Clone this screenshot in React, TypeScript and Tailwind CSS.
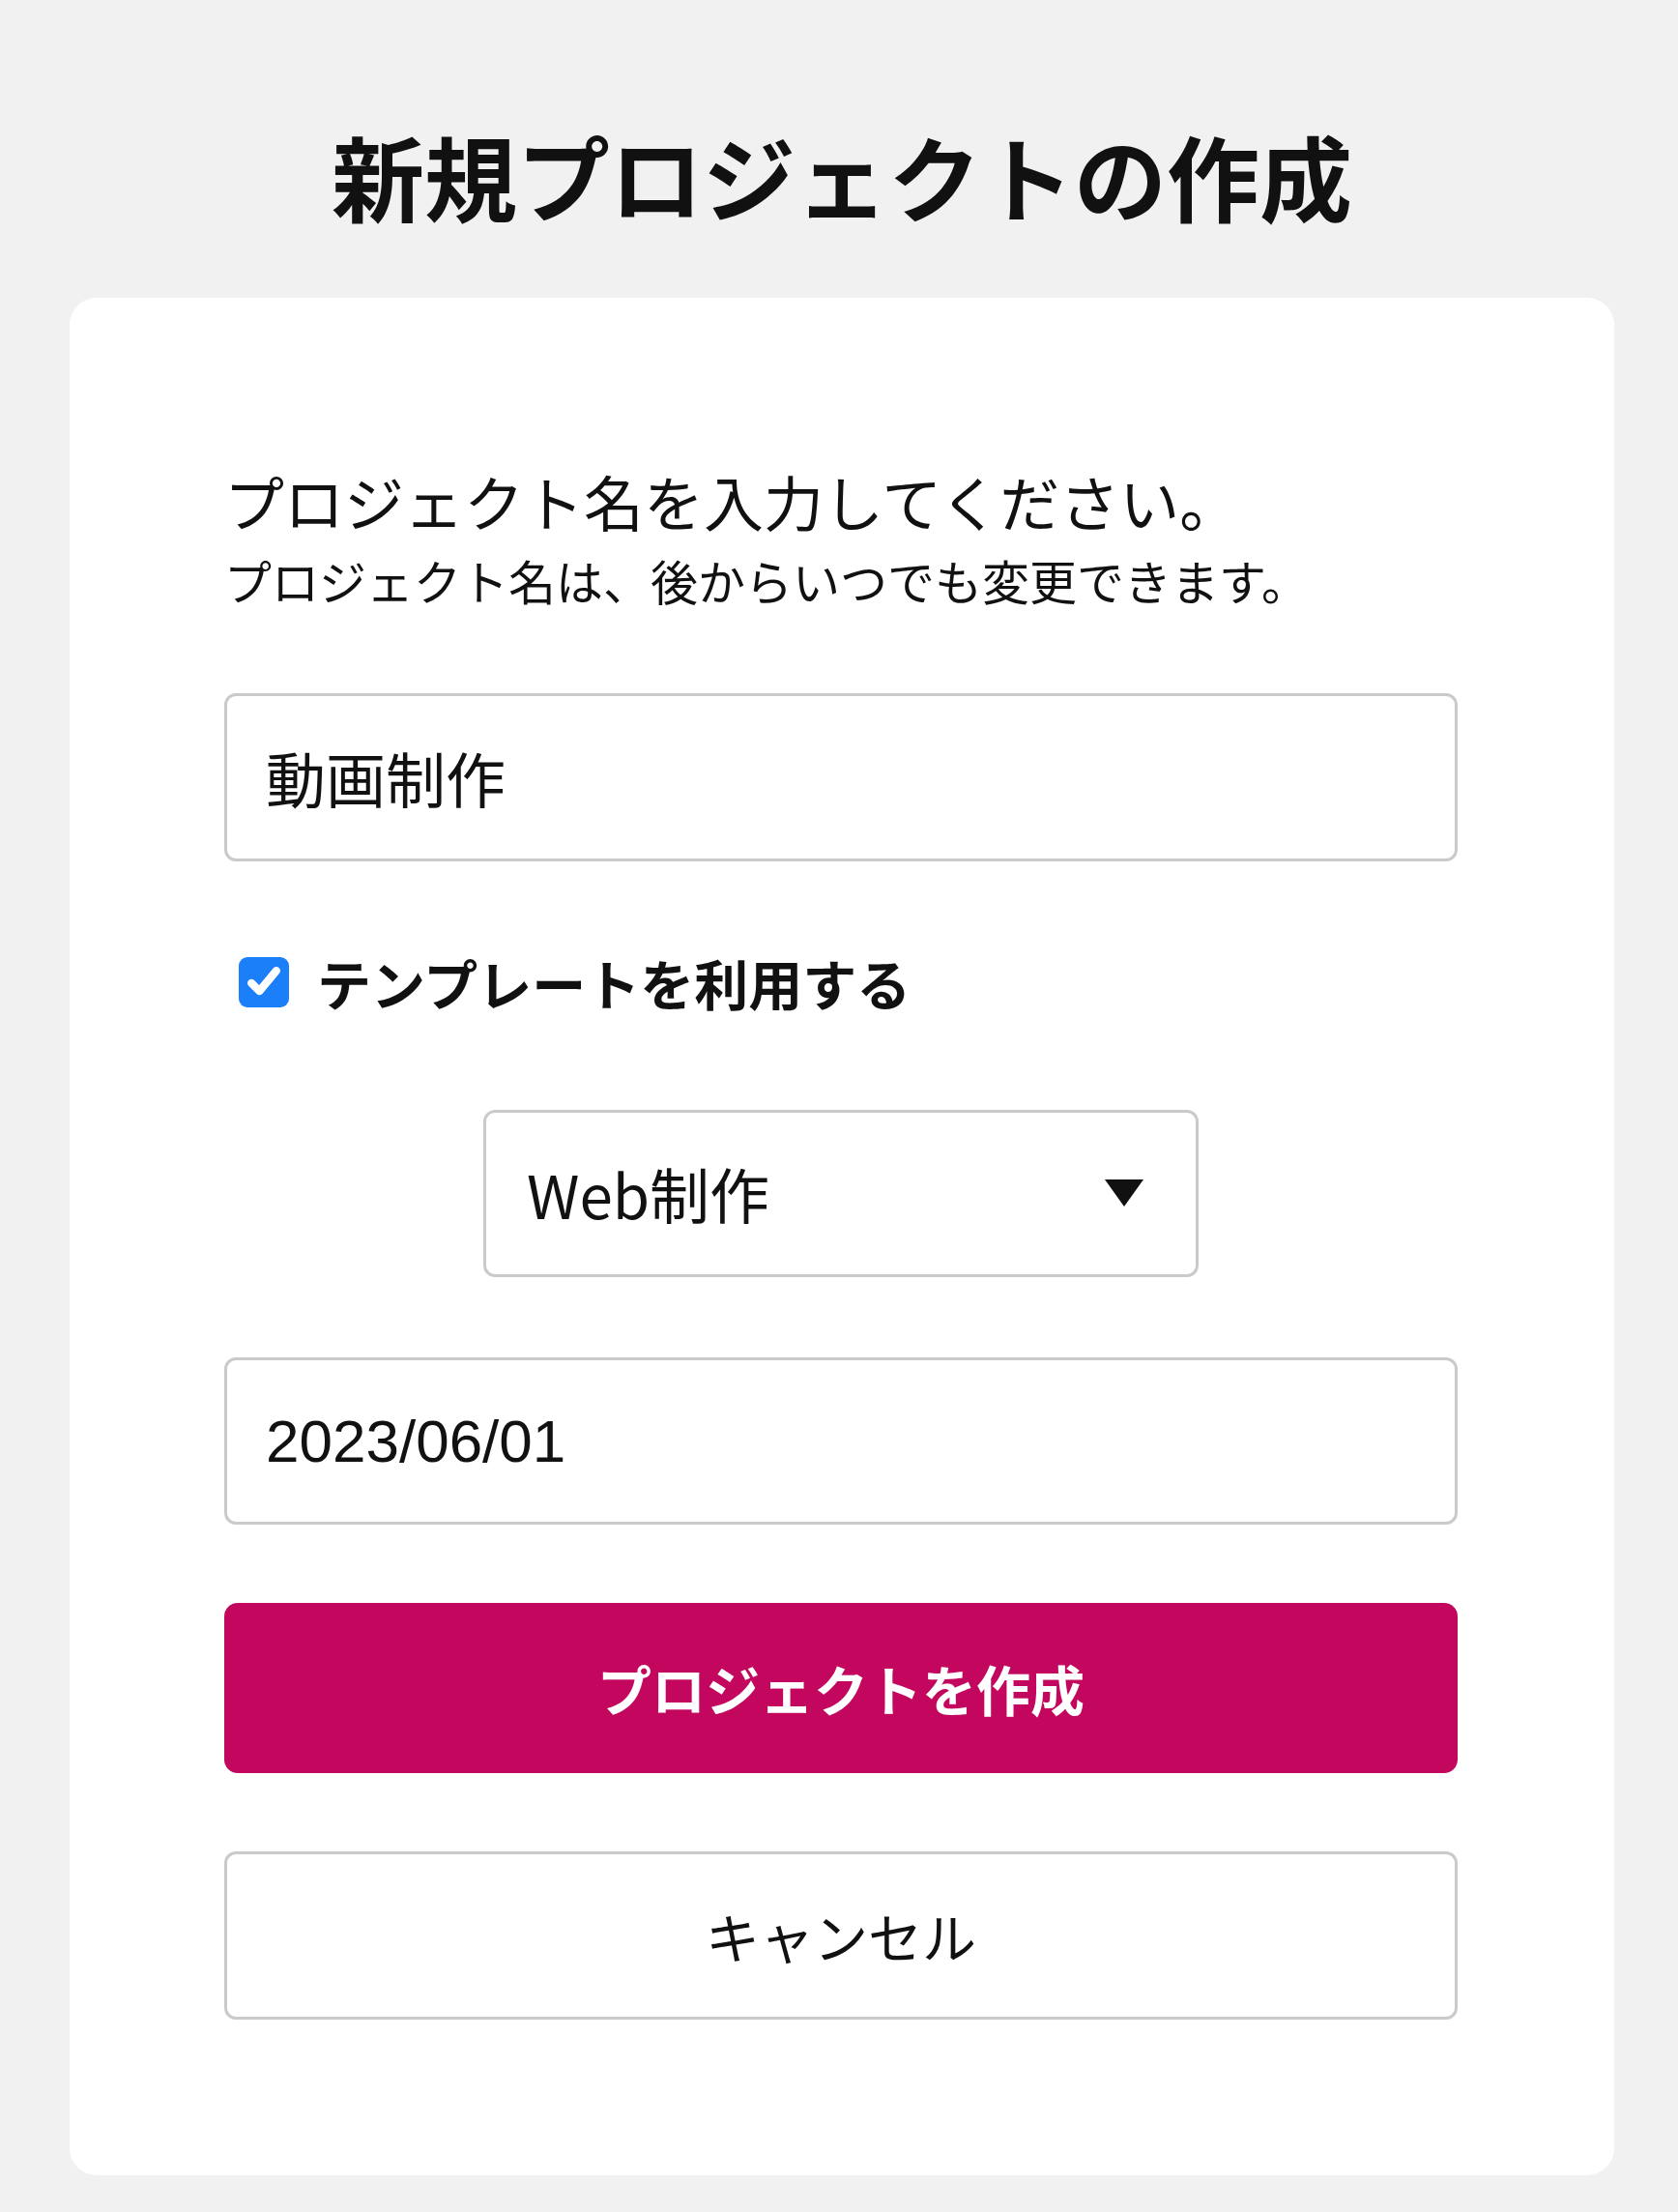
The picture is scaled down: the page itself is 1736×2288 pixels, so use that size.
import React from 'react'

const jp = { fontFamily: '"Noto Sans CJK JP", "Noto Sans", sans-serif' }

export default function App() {
  return (
    <div className="min-h-[2288px] bg-[#f2f1f2] pt-[133px] pb-[38px] pl-[72px] pr-[66px]" style={jp}>
      <h1 className="text-center text-[96px] leading-none font-bold text-[#111]">新規プロジェクトの作成</h1>

      <div className="mt-[79px] rounded-[28px] bg-white pt-[179px] pb-[161px] pl-[160px] pr-[162px]">
        <p className="text-[62px] leading-none text-[#111]">プロジェクト名を入力してください。</p>
        <p className="mt-[26px] text-[49px] leading-none text-[#111]">プロジェクト名は、後からいつでも変更できます。</p>

        <input
          type="text"
          defaultValue="動画制作"
          className="mt-[93px] block h-[174px] w-full rounded-[12px] border-[3px] border-[#cbc9cb] bg-white px-[40px] text-[62px] text-[#111] outline-none"
          style={jp}
        />

        <label className="mt-[97px] ml-[15px] flex items-center gap-[29px]">
          <span className="flex h-[52px] w-[52px] items-center justify-center rounded-[9px] bg-[#1a7ff8]">
            <svg viewBox="0 0 24 24" className="h-[44px] w-[44px]" fill="none" stroke="white" strokeWidth="4.5" strokeLinecap="round" strokeLinejoin="round">
              <path d="M5 12.5l4.5 4.5L19 5.5" />
            </svg>
          </span>
          <span className="text-[56px] leading-none font-bold text-[#111]">テンプレートを利用する</span>
        </label>

        <div className="relative mx-auto mt-[104px] w-[740px]">
          <select
            defaultValue="web"
            className="block h-[173px] w-full appearance-none rounded-[12px] border-[3px] border-[#cbc9cb] bg-white pl-[42px] text-[62px] text-[#111] outline-none"
            style={jp}
          >
            <option value="web">Web制作</option>
            <option value="video">動画制作</option>
          </select>
          <svg viewBox="0 0 40 28" className="pointer-events-none absolute right-[57px] top-[72px] h-[28px] w-[40px]">
            <path d="M0 0h40L20 28z" fill="#111" />
          </svg>
        </div>

        <input
          type="text"
          defaultValue="2023/06/01"
          className="mt-[83px] block h-[173px] w-full rounded-[12px] border-[3px] border-[#cbc9cb] bg-white px-[40px] text-[62px] text-[#111] outline-none"
          style={{ fontFamily: '"Liberation Sans", Arial, sans-serif' }}
        />

        <button className="mt-[81px] block h-[176px] w-full rounded-[14px] bg-[#c3075f] text-[56px] font-bold text-white">
          プロジェクトを作成
        </button>

        <button className="mt-[81px] block h-[174px] w-full rounded-[12px] border-[3px] border-[#cbc9cb] bg-white text-[56px] text-[#111]">
          キャンセル
        </button>
      </div>
    </div>
  )
}
